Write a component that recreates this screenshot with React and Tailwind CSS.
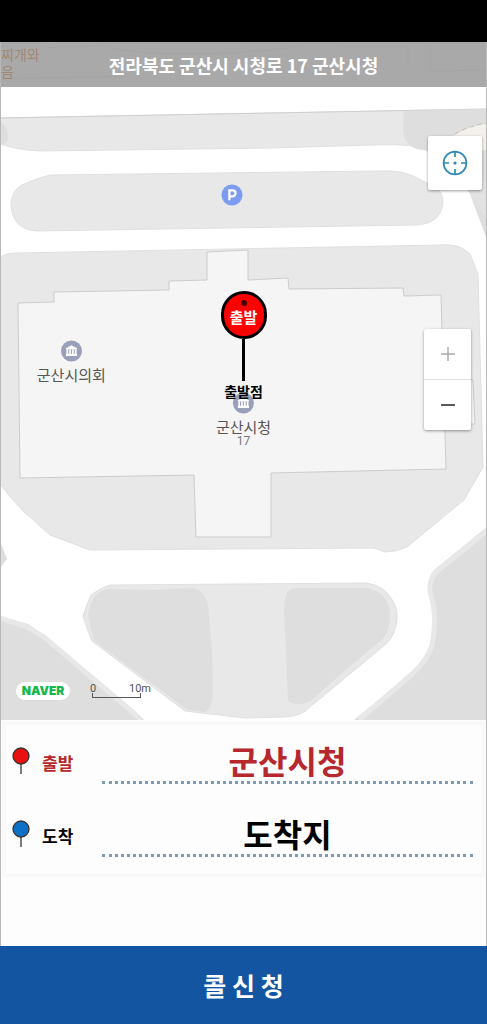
import { useState } from 'react';

const INSTITUTION = (
  <svg viewBox="0 0 22 22" className="block size-[22px]" aria-hidden="true">
    <circle cx="11" cy="11" r="10.5" fill="#9a9fba" />
    <path d="M5.4 9.6V8.3L11 5.2l5.6 3.1v1.3z" fill="#fff" />
    <path d="M6.8 9.6v4.6M9.6 9.6v4.6M12.4 9.6v4.6M15.2 9.6v4.6" stroke="#fff" strokeWidth="1.7" />
    <path d="M5.4 13.8h11.2v2.1H5.4z" fill="#fff" />
  </svg>
);

function MapDrawing() {
  return (
    <svg
      viewBox="1 42 485 678"
      preserveAspectRatio="xMidYMid slice"
      className="absolute inset-0 size-full"
      aria-hidden="true"
    >
      <rect x="-400" y="42" width="1300" height="678" fill="#fff" />
      <path d="M0 42H487V87H0z" fill="#ebebeb" />
      <path d="M40 48l60-2M0 79l130-3M108 48q70 12 180 0q12-2 13-6M340 47h68v24M430 47v24l57-1" fill="none" stroke="#dedede" />
      <g fill="#e8e8e8" stroke="#e0e0e0" strokeWidth="1">
        <path d="M0 118L487 109V200L470 180 440 151Q424 150 412 146Q395 144 372 145L270 148 40 151Q18 150 0 144z" />
        <path d="M50 175L380 171Q400 170 413 176L433 186Q443 190 443 203Q441 223 418 225L36 231Q12 229 11 204Q12 190 22 185Q37 178 50 175z" />
        <path d="M-6 262Q4 252 17 253L440 245Q460 243 470 254L478 274 483 467 464 500 407 547Q396 552 385 552L374 548 90 550 50 535 24 512Q12 500 0 484z" />
        <path d="M110 585L366 583Q383 585 391 598Q398 607 397 620Q395 636 386 644L310 707Q302 716 285 717L245 718 185 711 92 641Q87 630 83 616Q86 606 91 595Q100 588 110 585z" />
      </g>
      <path d="M0 118L487 109" stroke="#cfcfcf" />
      <path d="M404 111L487 109V240L470 194 450 160 424 150Q402 149 403 124z" fill="#dedede" />
      <path d="M0 122Q8 126 8 138Q7 144 0 145z" fill="#dedede" />
      <path d="M442 148Q457 127 487 124V150z" fill="#f4f0ec" />
      <path d="M455 134Q468 126 487 123" fill="none" stroke="#c4bdb6" strokeDasharray="5 3" />
      <path d="M470 190Q472 205 487 217V180z" fill="#e2e2e2" />
      <g fill="#dedede">
        <path d="M110 589Q155 591 188 588Q204 587 208 605L212 650 213 690Q213 708 205 712L188 710 94 641 88 616Q91 590 110 589z" />
        <path d="M296 588L366 588Q389 592 390 615Q390 636 376 644L310 701Q295 708 288 700L286 650 284 610Q284 588 296 588z" />
        <path d="M0 541L7 559 0 568z" />
        <path d="M0 616L28 624 47 637 135 711 144 720H0z" />
        <path d="M487 527L434 570Q427 578 428 592Q436 613 430 645Q424 660 410 674L354 720H487z" />
      </g>
      <path d="M0 618L27 627 44 637 128 708 141 720" fill="none" stroke="#e8e8e8" strokeWidth="5" />
      <path d="M487 531L436 572Q429 580 430 592Q438 615 432 646Q427 661 411 675L359 720" fill="none" stroke="#e8e8e8" strokeWidth="5" />
      <path
        d="M18 303L54 302V292L169 290V281L207 280V252L248 250V280L288 278 289 289 403 288 404 296 441 295 446 469 271 473V537H196L194 475 20 478z"
        fill="#f5f5f5"
        stroke="#cccccc"
      />
      <path d="M460 380H473L475 424H462z" fill="#f5f5f5" stroke="#cccccc" />
    </svg>
  );
}

function Place({ className, name, note }) {
  return (
    <div className={`absolute flex -translate-x-1/2 flex-col items-center whitespace-nowrap text-[#555] ${className}`}>
      {INSTITUTION}
      <span className="mt-[5px] text-[15px] leading-4">{name}</span>
      {note && <span className="font-[Roboto,sans-serif] text-xs leading-3 text-[#777]">{note}</span>}
    </div>
  );
}

function RouteField({ id, label, value, onChange, pinColor, textColor }) {
  return (
    <div className="flex items-start">
      <svg viewBox="0 0 18 28" className="mt-2 h-7 w-[18px] shrink-0" aria-hidden="true">
        <path d="M9 17v10" stroke="#444" strokeWidth="1.4" />
        <circle cx="9" cy="9" r="8" fill={pinColor} stroke="#333" strokeWidth="1.3" />
      </svg>
      <label htmlFor={id} className={`mt-[10px] ml-3 w-[60px] shrink-0 text-[17px] leading-7 font-bold ${textColor}`}>
        {label}
      </label>
      <input
        id={id}
        type="text"
        value={value}
        onChange={(event) => onChange(event.target.value)}
        className={`h-[45px] min-w-0 flex-1 border-b-[3px] border-dotted border-[#7d9bb5] bg-transparent text-center text-[32px] leading-10 font-bold outline-none ${textColor}`}
      />
    </div>
  );
}

export default function App() {
  const [origin, setOrigin] = useState('군산시청');
  const [destination, setDestination] = useState('도착지');

  return (
    <div className="flex min-h-screen flex-col bg-[#fdfdfd] font-['Noto_Sans_CJK_KR',sans-serif]">
      <div className="h-[42px] bg-black" />

      <main className="flex flex-1 flex-col border-x border-[#b8b8b8]">
        <section className="relative min-h-[600px] flex-1 overflow-hidden" aria-label="지도">
          <MapDrawing />

          <p className="absolute top-1 left-0 text-sm leading-[17px] text-[#d88a50]">
            찌개와
            <br />음
          </p>

          <header className="relative flex h-[45px] items-center justify-center bg-[#868686]/65">
            <h1 className="text-lg leading-6 font-bold text-white">전라북도 군산시 시청로 17 군산시청</h1>
          </header>

          <svg viewBox="0 0 22 22" className="absolute top-[142px] left-[47.7%] size-[22px] -translate-x-1/2" aria-hidden="true">
            <circle cx="11" cy="11" r="10.5" fill="#7b9cf0" />
            <path d="M8.4 16.3V6.4h3.2a2.9 2.9 0 0 1 0 5.9H8.4" fill="none" stroke="#fff" strokeWidth="2.3" />
          </svg>

          <Place className="top-[298px] left-[14.5%]" name="군산시의회" />
          <Place className="top-[350px] left-1/2" name="군산시청" note="17" />

          <div className="absolute top-[249px] left-1/2 flex -translate-x-1/2 flex-col items-center whitespace-nowrap">
            <div className="relative flex h-12 w-[46px] items-center justify-center rounded-full border-[3px] border-black bg-[#ff0000] pt-1 text-[15px] leading-5 font-bold text-white">
              <span className="absolute top-[6px] size-[6px] rounded-full bg-[#400]" />
              출발
            </div>
            <span className="h-[42px] w-[3px] bg-black" />
            <span className="text-sm leading-5 font-bold text-black">출발점</span>
          </div>

          <button
            type="button"
            aria-label="현재 위치"
            className="absolute top-[94px] right-1 flex size-[54px] items-center justify-center rounded-xs bg-white shadow-[0_1px_3px_rgba(0,0,0,0.4)]"
          >
            <svg viewBox="0 0 26 26" className="size-[26px]" fill="none" stroke="#3088b5" strokeWidth="1.7" aria-hidden="true">
              <circle cx="13" cy="13" r="11.4" />
              <path d="M13 2v5M13 19v5M2 13h5M19 13h5" />
              <circle cx="13" cy="13" r="1.6" fill="#3088b5" stroke="none" />
            </svg>
          </button>

          <div className="absolute top-[287px] right-[15px] flex w-[47px] flex-col divide-y divide-[#ddd] rounded-xs bg-white shadow-[0_1px_3px_rgba(0,0,0,0.4)]">
            <button type="button" aria-label="확대" className="flex h-[51px] items-center justify-center">
              <svg viewBox="0 0 16 16" className="size-4" stroke="#aaa" strokeWidth="1.4" aria-hidden="true">
                <path d="M8 1v14M1 8h14" />
              </svg>
            </button>
            <button type="button" aria-label="축소" className="flex h-[50px] items-center justify-center">
              <svg viewBox="0 0 16 16" className="size-4" stroke="#333" strokeWidth="1.6" aria-hidden="true">
                <path d="M1 8h14" />
              </svg>
            </button>
          </div>

          <div className="absolute bottom-5 left-[15px] flex items-end gap-[22px]">
            <span className="flex h-[18px] w-[54px] items-center justify-center rounded-full bg-white font-[Inter,sans-serif] text-xs leading-none font-black text-[#13b84b]">
              NAVER
            </span>
            <div className="relative mb-[2px] h-[5px] w-[49px] border-x border-b border-[#555] font-[Roboto,sans-serif] text-[11px] leading-3 text-[#555]">
              <span className="absolute bottom-[2px] left-0 -translate-x-1/2">0</span>
              <span className="absolute bottom-[2px] left-full -translate-x-1/2">10m</span>
            </div>
          </div>
        </section>

        <form className="mx-[1px] mt-[1px] mb-[69px] flex flex-col gap-7 border-4 border-[#f9f9f9] pt-[14px] pr-2 pb-4 pl-[6px]">
          <RouteField
            id="origin"
            label="출발"
            value={origin}
            onChange={setOrigin}
            pinColor="#e81010"
            textColor="text-[#b7282e]"
          />
          <RouteField
            id="destination"
            label="도착"
            value={destination}
            onChange={setDestination}
            pinColor="#0c70c4"
            textColor="text-black"
          />
        </form>
      </main>

      <button type="button" className="flex h-[78px] items-center justify-center bg-[#1455a2] text-[25px] leading-8 font-bold text-white">
        콜 신 청
      </button>
    </div>
  );
}
